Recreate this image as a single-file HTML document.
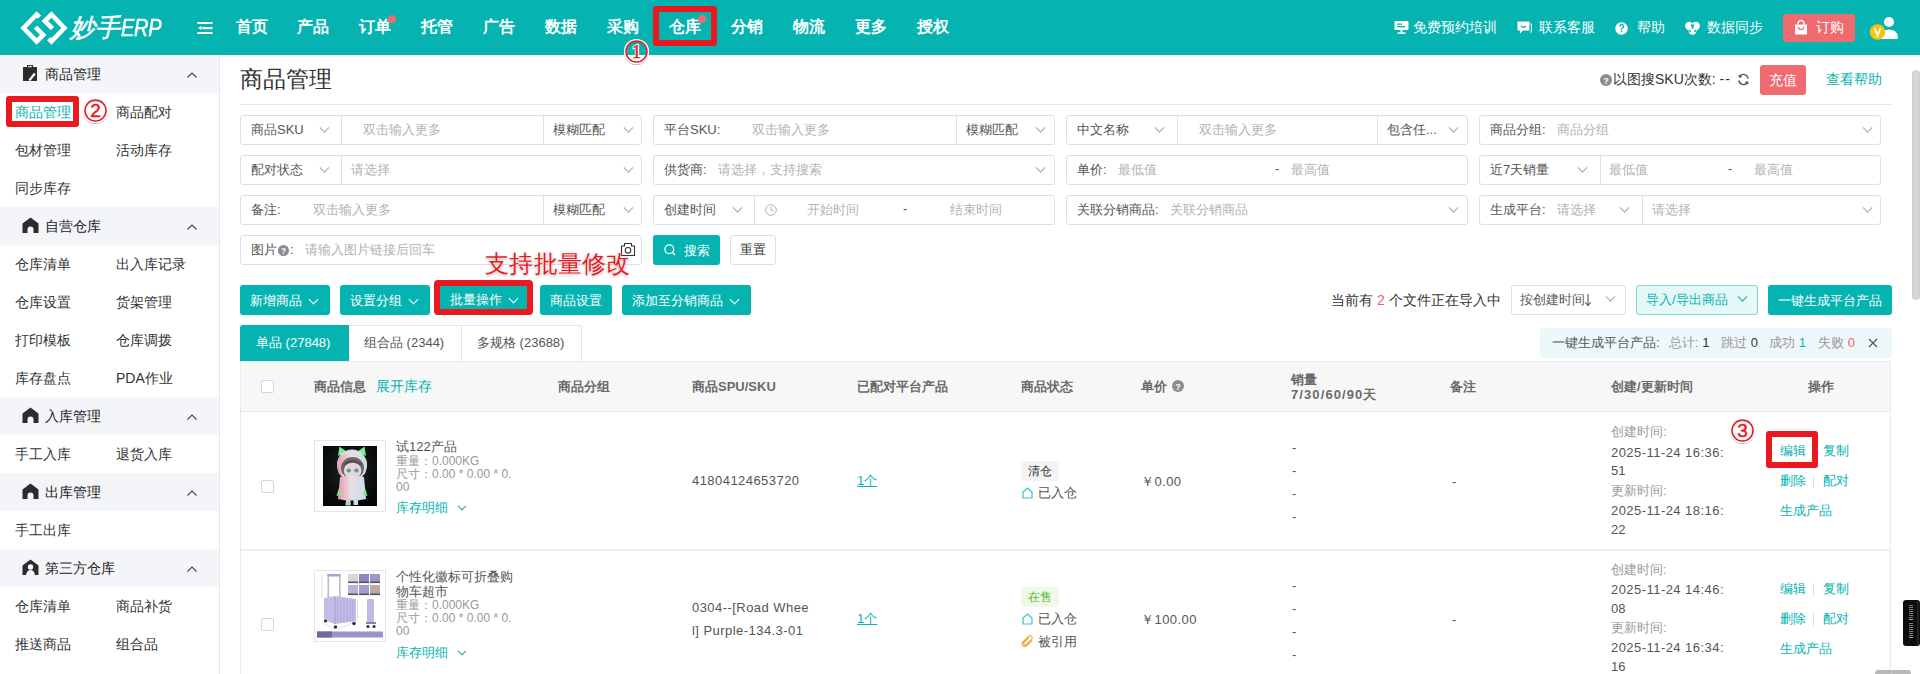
<!DOCTYPE html>
<html><head><meta charset="utf-8">
<style>
*{box-sizing:border-box;margin:0;padding:0}
html,body{width:1920px;height:674px;overflow:hidden;background:#fff;font-family:"Liberation Sans",sans-serif;color:#333;font-size:13px}
.a{position:absolute;white-space:nowrap}
#hdr{position:absolute;left:0;top:0;width:1920px;height:55px;background:#05b3b1}
.nav{position:absolute;top:16.3px;color:#fff;font-size:16px;font-weight:bold;line-height:22px}
.dot{position:absolute;width:8px;height:8px;border-radius:50%;background:#f06b70}
.hr{position:absolute;top:17px;color:#fff;font-size:14px;line-height:20px}
#side{position:absolute;left:0;top:55px;width:220px;height:619px;border-right:1px solid #e6e8ee;background:#fff}
.sh{position:absolute;left:0;width:219px;height:38px;background:#f4f5f9}
.sh .t{position:absolute;left:45px;top:9px;font-size:14px;line-height:20px;color:#222}
.sh .car{position:absolute;left:187px;top:17px}
.sh .ic{position:absolute;left:22px;top:10px}
.si{position:absolute;font-size:14px;line-height:20px;color:#333}
.box{position:absolute;border:1px solid #dcdfe6;border-radius:3px;background:#fff}
.lbl{position:absolute;font-size:13px;line-height:18px;color:#555}
.ph{position:absolute;font-size:13px;line-height:18px;color:#b0b3b8}
.chev{position:absolute;width:7px;height:7px;border-right:1px solid #a6a9b0;border-bottom:1px solid #a6a9b0;transform:translateY(-0.7px) rotate(45deg)}
.vl{position:absolute;width:1px;background:#dcdfe6}
.btn{position:absolute;height:30px;background:#05b3b1;color:#fff;border-radius:3px;font-size:13px;line-height:31px;text-align:center}
.wchev{display:inline-block;width:7px;height:7px;border-right:1px solid #fff;border-bottom:1px solid #fff;transform:rotate(45deg);margin-left:8px;position:relative;top:-2.5px}
.th{position:absolute;top:377.5px;font-size:13px;font-weight:bold;color:#6a6a6a;line-height:18px}
.td{position:absolute;font-size:13px;line-height:18px;color:#555}
.lnk{color:#05b3b1}
.redbox{position:absolute;border:4px solid #e8191f;border-radius:3px}
.circ{position:absolute;width:22px;height:22px;border-radius:50%;border:1.5px solid #e8191f;background:#fff;color:#e8191f;font-size:16px;line-height:19px;text-align:center;box-shadow:0 0 2px rgba(0,0,0,.4)}
</style></head><body>
<div id="hdr">
  <svg class="a" style="left:15px;top:5px" width="60" height="45" viewBox="0 0 60 45">
    <g fill="none" stroke="#fff" stroke-width="4.6" stroke-linejoin="miter" stroke-miterlimit="10">
      <path d="M24.5 12.2 L21.7 9.5 L8.5 23 L21.7 36.4 L28.2 29.9 L20.5 22.2"/>
      <path d="M33.7 33.7 L36.4 36.4 L49.4 23 L36.4 9.5 L29.8 16 L37.5 23.7"/>
    </g>
  </svg>
  <div class="a" style="left:70px;top:12px;color:#fff;font-size:25px;font-style:italic;line-height:30px;letter-spacing:-0.3px;-webkit-text-stroke:0.5px #fff">妙手<span style="display:inline-block;font-size:23px;letter-spacing:-0.3px;margin-left:1.5px;transform:scaleX(0.87);transform-origin:0 0">ERP</span></div>
  <svg class="a" style="left:197px;top:21px" width="17" height="14" viewBox="0 0 17 14">
    <g fill="#fff"><rect x="0.5" y="1" width="15" height="2"/><rect x="5.5" y="6" width="10" height="2.2"/><rect x="0.5" y="11" width="15" height="2"/><path d="M1 7 L4.7 5 L4.7 9Z"/></g>
  </svg>
  <div class="nav" style="left:236px">首页</div>
  <div class="nav" style="left:297px">产品</div>
  <div class="nav" style="left:359px">订单</div>
  <div class="dot" style="left:388px;top:15px"></div>
  <div class="nav" style="left:421px">托管</div>
  <div class="nav" style="left:483px">广告</div>
  <div class="nav" style="left:545px">数据</div>
  <div class="nav" style="left:607px">采购</div>
  <div class="nav" style="left:669px">仓库</div>
  <div class="dot" style="left:698px;top:15px"></div>
  <div class="nav" style="left:731px">分销</div>
  <div class="nav" style="left:793px">物流</div>
  <div class="nav" style="left:855px">更多</div>
  <div class="nav" style="left:917px">授权</div>

  <svg class="a" style="left:1394px;top:20px" width="15" height="14" viewBox="0 0 15 14"><rect x="0.5" y="1" width="14" height="9" rx="1" fill="#fff"/><rect x="3" y="3.5" width="5" height="1.3" fill="#05b3b1"/><rect x="3" y="6" width="8" height="1.3" fill="#05b3b1"/><rect x="6.5" y="10" width="2" height="2.5" fill="#fff"/><rect x="3.5" y="12.3" width="8" height="1.5" fill="#fff"/></svg>
  <div class="hr" style="left:1413px">免费预约培训</div>
  <svg class="a" style="left:1517px;top:21px" width="15" height="13" viewBox="0 0 15 13"><path d="M0.5 0.5 H12.5 V9.5 H6 L3 12.5 V9.5 H0.5Z" fill="#fff"/><path d="M13 3 H14.5 V11 H13" fill="none" stroke="#fff" stroke-width="1"/><path d="M4 5 Q6.5 7.5 9 5" fill="none" stroke="#05b3b1" stroke-width="1.2"/></svg>
  <div class="hr" style="left:1539px">联系客服</div>
  <svg class="a" style="left:1615px;top:22px" width="13" height="13" viewBox="0 0 13 13"><circle cx="6.5" cy="6.5" r="6.2" fill="#fff"/><text x="6.5" y="10.3" font-size="10" font-weight="bold" fill="#05b3b1" text-anchor="middle" font-family="Liberation Sans">?</text></svg>
  <div class="hr" style="left:1637px">帮助</div>
  <svg class="a" style="left:1685px;top:21px" width="15" height="14" viewBox="0 0 15 14"><g fill="#fff"><circle cx="4.3" cy="5" r="4.2"/><circle cx="10.7" cy="5" r="4.2"/><circle cx="7.5" cy="9.5" r="4.2"/></g><g fill="#05b3b1"><path d="M7.5 7.2 L5.3 3.6 H9.7Z"/><path d="M7.5 7.8 L10 11.5 L11.6 7.2Z" opacity="0"/><circle cx="7.5" cy="6.8" r="1"/><path d="M5 8 L3.6 10.4 L6.2 11.4Z"/><path d="M10 8 L11.4 10.4 L8.8 11.4Z"/></g></svg>
  <div class="hr" style="left:1707px">数据同步</div>
  <div class="a" style="left:1783px;top:14px;width:72px;height:28px;background:#f06b6f;border-radius:3px"></div>
  <svg class="a" style="left:1794px;top:20px" width="14" height="15" viewBox="0 0 14 15"><path d="M1 4.5 H13 V14.5 H1Z" fill="#fff"/><path d="M4 4.5 V3.5 A3 3 0 0 1 10 3.5 V4.5" fill="none" stroke="#fff" stroke-width="1.4"/><path d="M4.5 7 A2.5 2.5 0 0 0 9.5 7" fill="none" stroke="#f06b6f" stroke-width="1.3"/></svg>
  <div class="hr" style="left:1816px">订购</div>
  <svg class="a" style="left:1868px;top:16px" width="32" height="25" viewBox="0 0 32 25"><circle cx="21" cy="6" r="5" fill="#fff"/><path d="M11.5 21.5 Q11.5 14 21 13.5 Q30 14 30 21.5 Q30 23 28.5 23 H13 Q11.5 23 11.5 21.5Z" fill="#fff"/><circle cx="9.5" cy="16" r="7.8" fill="#f5c412"/><path d="M6.6 12.3 L9.5 19.8 L12.4 12.3" fill="none" stroke="#fff" stroke-width="1.8"/></svg>
</div>

<div id="side">
<div class="sh" style="top:0px"><svg class="ic" width="16" height="17" viewBox="0 0 16 17"><rect x="1" y="2" width="14" height="14" fill="#2c2c2c"/><rect x="5" y="0" width="6" height="3" fill="#2c2c2c"/><rect x="6" y="0.8" width="4" height="1.5" fill="#ccc"/><path d="M7.3 15.5 L12.8 8.5" stroke="#fff" stroke-width="2.2"/></svg><div class="t">商品管理</div><svg class="car" width="10" height="6" viewBox="0 0 10 6"><path d="M0.5 5.5 L5 1 L9.5 5.5" fill="none" stroke="#444" stroke-width="1.1"/></svg></div>
<div class="si" style="left:15px;top:47px;color:#05b3b1">商品管理</div>
<div class="si" style="left:116px;top:47px">商品配对</div>
<div class="si" style="left:15px;top:85px">包材管理</div>
<div class="si" style="left:116px;top:85px">活动库存</div>
<div class="si" style="left:15px;top:123px">同步库存</div>
<div class="sh" style="top:152px"><svg class="ic" width="17" height="16" viewBox="0 0 17 16"><path d="M0.5 6.5 L8.5 0.5 L16.5 6.5 V16 H11.5 V12.5 A3 3 0 0 0 5.5 12.5 V16 H0.5Z" fill="#2c2c2c"/></svg><div class="t">自营仓库</div><svg class="car" width="10" height="6" viewBox="0 0 10 6"><path d="M0.5 5.5 L5 1 L9.5 5.5" fill="none" stroke="#444" stroke-width="1.1"/></svg></div>
<div class="si" style="left:15px;top:199px">仓库清单</div>
<div class="si" style="left:116px;top:199px">出入库记录</div>
<div class="si" style="left:15px;top:237px">仓库设置</div>
<div class="si" style="left:116px;top:237px">货架管理</div>
<div class="si" style="left:15px;top:275px">打印模板</div>
<div class="si" style="left:116px;top:275px">仓库调拨</div>
<div class="si" style="left:15px;top:313px">库存盘点</div>
<div class="si" style="left:116px;top:313px">PDA作业</div>
<div class="sh" style="top:342px"><svg class="ic" width="17" height="16" viewBox="0 0 17 16"><path d="M0.5 6.5 L8.5 0.5 L16.5 6.5 V16 H11.5 V12.5 A3 3 0 0 0 5.5 12.5 V16 H0.5Z" fill="#2c2c2c"/></svg><div class="t">入库管理</div><svg class="car" width="10" height="6" viewBox="0 0 10 6"><path d="M0.5 5.5 L5 1 L9.5 5.5" fill="none" stroke="#444" stroke-width="1.1"/></svg></div>
<div class="si" style="left:15px;top:389px">手工入库</div>
<div class="si" style="left:116px;top:389px">退货入库</div>
<div class="sh" style="top:418px"><svg class="ic" width="17" height="16" viewBox="0 0 17 16"><path d="M0.5 6.5 L8.5 0.5 L16.5 6.5 V16 H11.5 V12.5 A3 3 0 0 0 5.5 12.5 V16 H0.5Z" fill="#2c2c2c"/></svg><div class="t">出库管理</div><svg class="car" width="10" height="6" viewBox="0 0 10 6"><path d="M0.5 5.5 L5 1 L9.5 5.5" fill="none" stroke="#444" stroke-width="1.1"/></svg></div>
<div class="si" style="left:15px;top:465px">手工出库</div>
<div class="sh" style="top:494px"><svg class="ic" width="17" height="16" viewBox="0 0 17 16"><path d="M0.5 6.5 L8.5 0.5 L16.5 6.5 V16 H13 Q12 11 8.5 11 Q5 11 4 16 H0.5Z" fill="#2c2c2c"/><circle cx="8.5" cy="8" r="2.7" fill="#fff"/></svg><div class="t">第三方仓库</div><svg class="car" width="10" height="6" viewBox="0 0 10 6"><path d="M0.5 5.5 L5 1 L9.5 5.5" fill="none" stroke="#444" stroke-width="1.1"/></svg></div>
<div class="si" style="left:15px;top:541px">仓库清单</div>
<div class="si" style="left:116px;top:541px">商品补货</div>
<div class="si" style="left:15px;top:579px">推送商品</div>
<div class="si" style="left:116px;top:579px">组合品</div>
</div>

<!-- MAIN -->
<div class="a" style="left:240px;top:65px;font-size:23px;line-height:28px;color:#333">商品管理</div>


<!-- title right -->
<svg class="a" style="left:1600px;top:74px" width="12" height="12" viewBox="0 0 12 12"><circle cx="6" cy="6" r="6" fill="#8a8d93"/><text x="6" y="9.5" font-size="9" font-weight="bold" fill="#fff" text-anchor="middle" font-family="Liberation Sans">?</text></svg>
<div class="a" style="left:1613px;top:69px;font-size:14px;line-height:20px;color:#333">以图搜SKU次数: <span style="letter-spacing:1px">--</span></div>
<svg class="a" style="left:1737px;top:73px" width="13" height="13" viewBox="0 0 14 14"><g fill="none" stroke="#555" stroke-width="1.4"><path d="M12 6 A5 5 0 0 0 3 3.5"/><path d="M2 8 A5 5 0 0 0 11 10.5"/></g><path d="M1.5 1.5 L2.2 5.5 L5.8 4Z" fill="#555"/><path d="M12.5 12.5 L11.8 8.5 L8.2 10Z" fill="#555"/></svg>
<div class="a" style="left:1760px;top:65px;width:46px;height:30px;background:#f06b6f;border-radius:3px;color:#fff;font-size:14px;line-height:30px;text-align:center">充值</div>
<div class="a lnk" style="left:1826px;top:69px;font-size:14px;line-height:20px">查看帮助</div>
<div class="a" style="left:240px;top:104px;width:1652px;height:1px;background:#e4e6eb"></div>

<!-- filter row 1 -->
<div class="box" style="left:240px;top:115px;width:402px;height:30px"></div>
<div class="vl" style="left:341px;top:116px;height:28px"></div>
<div class="vl" style="left:543px;top:116px;height:28px"></div>
<div class="lbl" style="left:251px;top:121px">商品SKU</div><div class="chev" style="left:321px;top:125px"></div>
<div class="ph" style="left:363px;top:121px">双击输入更多</div>
<div class="lbl" style="left:553px;top:121px">模糊匹配</div><div class="chev" style="left:625px;top:125px"></div>

<div class="box" style="left:653px;top:115px;width:402px;height:30px"></div>
<div class="vl" style="left:956px;top:116px;height:28px"></div>
<div class="lbl" style="left:664px;top:121px">平台SKU:</div>
<div class="ph" style="left:752px;top:121px">双击输入更多</div>
<div class="lbl" style="left:966px;top:121px">模糊匹配</div><div class="chev" style="left:1037px;top:125px"></div>

<div class="box" style="left:1066px;top:115px;width:402px;height:30px"></div>
<div class="vl" style="left:1177px;top:116px;height:28px"></div>
<div class="vl" style="left:1377px;top:116px;height:28px"></div>
<div class="lbl" style="left:1077px;top:121px">中文名称</div><div class="chev" style="left:1156px;top:125px"></div>
<div class="ph" style="left:1199px;top:121px">双击输入更多</div>
<div class="lbl" style="left:1387px;top:121px">包含任...</div><div class="chev" style="left:1450px;top:125px"></div>

<div class="box" style="left:1479px;top:115px;width:402px;height:30px"></div>
<div class="lbl" style="left:1490px;top:121px">商品分组:</div>
<div class="ph" style="left:1557px;top:121px">商品分组</div><div class="chev" style="left:1864px;top:125px"></div>

<!-- filter row 2 -->
<div class="box" style="left:240px;top:155px;width:402px;height:30px"></div>
<div class="vl" style="left:341px;top:156px;height:28px"></div>
<div class="lbl" style="left:251px;top:161px">配对状态</div><div class="chev" style="left:321px;top:165px"></div>
<div class="ph" style="left:351px;top:161px">请选择</div><div class="chev" style="left:625px;top:165px"></div>

<div class="box" style="left:653px;top:155px;width:402px;height:30px"></div>
<div class="lbl" style="left:664px;top:161px">供货商:</div>
<div class="ph" style="left:718px;top:161px">请选择，支持搜索</div><div class="chev" style="left:1037px;top:165px"></div>

<div class="box" style="left:1066px;top:155px;width:402px;height:30px"></div>
<div class="lbl" style="left:1077px;top:161px">单价:</div>
<div class="ph" style="left:1118px;top:161px">最低值</div>
<div class="lbl" style="left:1275px;top:160px">-</div>
<div class="ph" style="left:1291px;top:161px">最高值</div>

<div class="box" style="left:1479px;top:155px;width:402px;height:30px"></div>
<div class="vl" style="left:1600px;top:156px;height:28px"></div>
<div class="lbl" style="left:1490px;top:161px">近7天销量</div><div class="chev" style="left:1579px;top:165px"></div>
<div class="ph" style="left:1609px;top:161px">最低值</div>
<div class="lbl" style="left:1728px;top:160px">-</div>
<div class="ph" style="left:1754px;top:161px">最高值</div>

<!-- filter row 3 -->
<div class="box" style="left:240px;top:195px;width:402px;height:30px"></div>
<div class="vl" style="left:543px;top:196px;height:28px"></div>
<div class="lbl" style="left:251px;top:201px">备注:</div>
<div class="ph" style="left:313px;top:201px">双击输入更多</div>
<div class="lbl" style="left:553px;top:201px">模糊匹配</div><div class="chev" style="left:625px;top:205px"></div>

<div class="box" style="left:653px;top:195px;width:402px;height:30px"></div>
<div class="vl" style="left:754px;top:196px;height:28px"></div>
<div class="lbl" style="left:664px;top:201px">创建时间</div><div class="chev" style="left:734px;top:205px"></div>
<svg class="a" style="left:765px;top:204px" width="12" height="12" viewBox="0 0 12 12"><circle cx="6" cy="6" r="5.3" fill="none" stroke="#b0b3b8" stroke-width="1"/><path d="M6 3 V6.3 H8.5" fill="none" stroke="#b0b3b8" stroke-width="1"/></svg>
<div class="ph" style="left:807px;top:201px">开始时间</div>
<div class="lbl" style="left:903px;top:200px">-</div>
<div class="ph" style="left:950px;top:201px">结束时间</div>

<div class="box" style="left:1066px;top:195px;width:402px;height:30px"></div>
<div class="lbl" style="left:1077px;top:201px">关联分销商品:</div>
<div class="ph" style="left:1170px;top:201px">关联分销商品</div><div class="chev" style="left:1450px;top:205px"></div>

<div class="box" style="left:1479px;top:195px;width:402px;height:30px"></div>
<div class="vl" style="left:1642px;top:196px;height:28px"></div>
<div class="lbl" style="left:1490px;top:201px">生成平台:</div>
<div class="ph" style="left:1557px;top:201px">请选择</div><div class="chev" style="left:1621px;top:205px"></div>
<div class="ph" style="left:1652px;top:201px">请选择</div><div class="chev" style="left:1864px;top:205px"></div>

<!-- filter row 4 -->
<div class="box" style="left:240px;top:235px;width:402px;height:30px"></div>
<div class="lbl" style="left:251px;top:241px">图片</div>
<svg class="a" style="left:278px;top:245px" width="11" height="11" viewBox="0 0 12 12"><circle cx="6" cy="6" r="6" fill="#8a8d93"/><text x="6" y="9.5" font-size="9" font-weight="bold" fill="#fff" text-anchor="middle" font-family="Liberation Sans">?</text></svg>
<div class="lbl" style="left:290px;top:241px">:</div>
<div class="ph" style="left:305px;top:241px">请输入图片链接后回车</div>
<svg class="a" style="left:620px;top:242px" width="16" height="15" viewBox="0 0 16 15"><g fill="none" stroke="#333" stroke-width="1.1"><path d="M1.5 4 H4.5 V1.5 H11.5 V4 H14.5 V13.5 H1.5Z"/><circle cx="8" cy="8.3" r="2.8"/></g></svg>
<div class="btn" style="left:653px;top:235px;width:67px">
 <svg style="position:absolute;left:11px;top:9px" width="12" height="12" viewBox="0 0 12 12"><circle cx="5.3" cy="5.3" r="4.4" fill="none" stroke="#fff" stroke-width="1.3"/><path d="M8.5 8.5 L11 11" stroke="#fff" stroke-width="1.3"/></svg>
 <span style="position:absolute;left:31px;top:0">搜索</span></div>
<div class="box" style="left:730px;top:235px;width:46px;height:30px"></div>
<div class="lbl" style="left:740px;top:241px;color:#333">重置</div>


<!-- action buttons -->
<div class="btn" style="left:240px;top:285px;width:90px;text-align:left;padding-left:10px">新增商品<i class="wchev"></i></div>
<div class="btn" style="left:340px;top:285px;width:90px;text-align:left;padding-left:10px">设置分组<i class="wchev"></i></div>
<div class="btn" style="left:440px;top:285px;width:88px;text-align:left;padding-left:10px">批量操作<i class="wchev"></i></div>
<div class="btn" style="left:540px;top:285px;width:72px;text-align:left;padding-left:10px">商品设置</div>
<div class="btn" style="left:622px;top:285px;width:129px;text-align:left;padding-left:10px">添加至分销商品<i class="wchev"></i></div>

<div class="a" style="left:1331px;top:290px;font-size:14px;line-height:20px;color:#333">当前有 <span style="color:#f0626b">2</span> 个文件正在导入中</div>
<div class="box" style="left:1511px;top:285px;width:115px;height:30px"></div>
<div class="lbl" style="left:1520px;top:291px;color:#555">按创建时间</div><svg class="a" style="left:1584px;top:294px" width="8" height="12" viewBox="0 0 8 12"><path d="M4 0 V11.2" stroke="#555" stroke-width="1.1"/><path d="M1.3 8.3 L4 11.5 L6.7 8.3" fill="none" stroke="#555" stroke-width="1.1"/></svg><div class="chev" style="left:1607px;top:294px"></div>
<div class="a" style="left:1636px;top:285px;width:122px;height:30px;border:1px solid #7fd4d2;background:#e6f7f7;border-radius:3px"></div>
<div class="a lnk" style="left:1646px;top:291px;font-size:13px;line-height:18px">导入/导出商品</div><div class="chev" style="left:1739px;top:294px;border-color:#05b3b1"></div>
<div class="btn" style="left:1768px;top:285px;width:124px">一键生成平台产品</div>

<!-- tabs -->
<div class="a" style="left:240px;top:325px;width:342px;height:36px;border:1px solid #e4e6eb;border-bottom:none;border-radius:3px 3px 0 0"></div>
<div class="a" style="left:240px;top:325px;width:109px;height:36px;background:#05b3b1;border-radius:3px 0 0 0"></div>
<div class="a" style="left:461px;top:325px;width:1px;height:36px;background:#e4e6eb"></div>
<div class="a" style="left:256px;top:334px;font-size:13px;line-height:18px;color:#fff">单品 (27848)</div>
<div class="a" style="left:364px;top:334px;font-size:13px;line-height:18px;color:#555">组合品 (2344)</div>
<div class="a" style="left:477px;top:334px;font-size:13px;line-height:18px;color:#555">多规格 (23688)</div>

<div class="a" style="left:1540px;top:328px;width:352px;height:30px;background:#eef7f9;border-radius:3px"></div>
<div class="a" style="left:1552px;top:334px;font-size:13px;line-height:18px;color:#555">一键生成平台产品:</div>
<div class="a" style="left:1669px;top:334px;font-size:13px;line-height:18px;color:#999">总计: <span style="color:#333">1</span></div>
<div class="a" style="left:1721px;top:334px;font-size:13px;line-height:18px;color:#999">跳过 <span style="color:#333">0</span></div>
<div class="a" style="left:1769px;top:334px;font-size:13px;line-height:18px;color:#999">成功 <span style="color:#05b3b1">1</span></div>
<div class="a" style="left:1818px;top:334px;font-size:13px;line-height:18px;color:#999">失败 <span style="color:#f0626b">0</span></div>
<svg class="a" style="left:1868px;top:338px" width="10" height="10" viewBox="0 0 10 10"><path d="M1 1 L9 9 M9 1 L1 9" stroke="#555" stroke-width="1.2"/></svg>

<!-- table -->
<div class="a" style="left:240px;top:361px;width:1651px;height:313px;border:1px solid #e8eaef;border-bottom:none"></div>
<div class="a" style="left:241px;top:362px;width:1649px;height:50px;background:#f7f7f8;border-bottom:1px solid #e8eaef"></div>
<div class="a" style="left:261px;top:380px;width:13px;height:13px;border:1px solid #d4d6db;border-radius:2px;background:#fff"></div>
<div class="th" style="left:314px">商品信息</div>
<div class="th lnk" style="left:376px;top:376px;font-weight:normal;font-size:14px;line-height:20px">展开库存</div>
<div class="th" style="left:558px">商品分组</div>
<div class="th" style="left:692px">商品SPU/SKU</div>
<div class="th" style="left:857px">已配对平台产品</div>
<div class="th" style="left:1021px">商品状态</div>
<div class="th" style="left:1141px">单价</div>
<svg class="a" style="left:1172px;top:380px" width="12" height="12" viewBox="0 0 12 12"><circle cx="6" cy="6" r="6" fill="#8a8d93"/><text x="6" y="9.5" font-size="9" font-weight="bold" fill="#fff" text-anchor="middle" font-family="Liberation Sans">?</text></svg>
<div class="th" style="left:1291px;top:373px;line-height:14.5px">销量<br><span style="letter-spacing:1.1px">7/30/60/90</span>天</div>
<div class="th" style="left:1450px">备注</div>
<div class="th" style="left:1611px">创建/更新时间</div>
<div class="th" style="left:1808px">操作</div>
<div class="a" style="left:241px;top:549px;width:1649px;height:2px;background:#eceef3"></div>


<!-- row 1 -->
<div class="a" style="left:261px;top:480px;width:13px;height:13px;border:1px solid #d4d6db;border-radius:2px;background:#fff"></div>
<div class="a" style="left:314px;top:440px;width:72px;height:72px;border:1px solid #e3e5ea;background:#fff"></div>
<svg class="a" style="left:323px;top:446px" width="54" height="60" viewBox="0 0 54 60">
  <defs>
   <radialGradient id="glow" cx="50%" cy="40%" r="60%"><stop offset="0" stop-color="#1a2422"/><stop offset="1" stop-color="#07080a"/></radialGradient>
   <linearGradient id="coat" x1="0" x2="1"><stop offset="0" stop-color="#e59aa8"/><stop offset="0.45" stop-color="#e9dde6"/><stop offset="1" stop-color="#c9dde6"/></linearGradient>
   <filter id="bl"><feGaussianBlur stdDeviation="0.6"/></filter>
  </defs>
  <rect width="54" height="60" fill="url(#glow)"/>
  <g filter="url(#bl)">
  <path d="M15 10 L16.5 0.5 L24 6 Z" fill="#7cf08e"/>
  <path d="M43 10 L41.5 0.5 L34 6 Z" fill="#7cf08e"/>
  <ellipse cx="29" cy="19" rx="15" ry="15.5" fill="#d9e2e4"/>
  <path d="M14 19 Q14 8 29 6 Q44 8 44 19 L42 28 Q29 31 16 28Z" fill="url(#coat)"/>
  <ellipse cx="29.5" cy="22" rx="11.5" ry="11" fill="#6f6667"/>
  <ellipse cx="29.6" cy="24.5" rx="8.8" ry="8" fill="#e6d5d4"/>
  <path d="M20.5 20 Q29.5 13 38.5 20 L38 17 Q29.5 11 21 17Z" fill="#5a4e50"/>
  <ellipse cx="25.8" cy="24.5" rx="2.2" ry="2" fill="#4fa59b"/>
  <ellipse cx="33.4" cy="24.5" rx="2.2" ry="2" fill="#4fa59b"/>
  <path d="M17 31 Q29 27 41 31 L43 53 Q29 56 15 53Z" fill="url(#coat)"/>
  <path d="M16 42 L13.5 50 L18 49Z" fill="#78e88e"/>
  <path d="M42 42 L44.5 50 L40 49Z" fill="#78e88e"/>
  <rect x="23" y="52" width="4.5" height="7" fill="#dccfd4"/>
  <rect x="30.5" y="52" width="4.5" height="7" fill="#cfdde2"/>
  <rect x="22.5" y="56.5" width="5" height="3" fill="#8fe6a4"/>
  </g>
</svg>
<div class="td" style="left:396px;top:440px;font-size:13px;line-height:14px;color:#555">试122产品</div>
<div class="td" style="left:396px;top:455px;font-size:12px;line-height:13px;color:#999">重量：0.000KG</div>
<div class="td" style="left:396px;top:468px;font-size:12px;line-height:13px;color:#999">尺寸：0.00 * 0.00 * 0.</div>
<div class="td" style="left:396px;top:481px;font-size:12px;line-height:13px;color:#999">00</div>
<div class="td lnk" style="left:396px;top:499px">库存明细</div><div class="chev" style="left:459px;top:504px;border-color:#05b3b1;width:6px;height:6px"></div>
<div class="td" style="left:692px;top:472px;letter-spacing:0.45px">41804124653720</div>
<div class="td lnk" style="left:857px;top:472px;text-decoration:underline">1个</div>
<div class="a" style="left:1021px;top:461px;width:38px;height:20px;background:#f4f4f5;border-radius:2px;font-size:12px;line-height:20px;text-align:center;color:#333">清仓</div>
<svg class="a" style="left:1022px;top:487px" width="11" height="12" viewBox="0 0 11 12"><path d="M1 5 L5.5 1 L10 5 V11 H1Z" fill="none" stroke="#3bbfd0" stroke-width="1.2"/></svg>
<div class="td" style="left:1038px;top:484px">已入仓</div>
<div class="td" style="left:1141px;top:473px;letter-spacing:0.45px">￥0.00</div>
<div class="td" style="left:1292px;top:439px">-</div>
<div class="td" style="left:1292px;top:462px">-</div>
<div class="td" style="left:1292px;top:485px">-</div>
<div class="td" style="left:1292px;top:508px">-</div>
<div class="td" style="left:1452px;top:473px">-</div>
<div class="td" style="left:1611px;top:423px;color:#999">创建时间:</div>
<div class="td" style="left:1611px;top:444px;letter-spacing:0.45px">2025-11-24 16:36:</div>
<div class="td" style="left:1611px;top:462px">51</div>
<div class="td" style="left:1611px;top:482px;color:#999">更新时间:</div>
<div class="td" style="left:1611px;top:502px;letter-spacing:0.45px">2025-11-24 18:16:</div>
<div class="td" style="left:1611px;top:521px">22</div>
<div class="td lnk" style="left:1780px;top:442px">编辑</div>
<div class="td lnk" style="left:1823px;top:442px">复制</div>
<div class="td lnk" style="left:1780px;top:472px">删除</div>
<div class="a" style="left:1813px;top:475px;width:1px;height:13px;background:#dcdfe6"></div>
<div class="td lnk" style="left:1823px;top:472px">配对</div>
<div class="td lnk" style="left:1780px;top:502px">生成产品</div>

<!-- row 2 -->
<div class="a" style="left:261px;top:618px;width:13px;height:13px;border:1px solid #d4d6db;border-radius:2px;background:#fff"></div>
<div class="a" style="left:314px;top:570px;width:72px;height:72px;border:1px solid #e3e5ea;background:#fff"></div>
<svg class="a" style="left:315px;top:571px" width="70" height="70" viewBox="0 0 70 70">
  <defs><filter id="bl2"><feGaussianBlur stdDeviation="0.45"/></filter></defs>
  <rect width="70" height="70" fill="#fff"/>
  <g filter="url(#bl2)">
  <g stroke="#c8c8d0" stroke-width="0.6" fill="none"><path d="M7 4 V27"/><path d="M8 52 L19 58"/><path d="M23 58 L38 52"/><path d="M42.5 29 V48"/><path d="M50 61 H60"/></g>
  <rect x="12" y="3" width="14" height="2.6" rx="1" fill="#a7a2d4"/>
  <rect x="12.5" y="4" width="1.6" height="24" fill="#bdbdc8"/><rect x="24" y="4" width="1.6" height="24" fill="#bdbdc8"/>
  <path d="M9 27 L20 25 L41 28 V50 L20 53 L9 49Z" fill="#c2bde6"/>
  <path d="M20 26 V53" stroke="#9c95c8" stroke-width="0.8"/>
  <g stroke="#a49dd0" stroke-width="0.7"><path d="M23 28 V52 M26 28 V52 M29 28 V52 M32 28.5 V51.5 M35 28.5 V51 M38 28.5 V50.5"/></g>
  <circle cx="10.5" cy="50" r="1.6" fill="#333"/><circle cx="20.5" cy="56" r="1.8" fill="#333"/><circle cx="39" cy="52.5" r="1.8" fill="#333"/>
  <rect x="52" y="28" width="7" height="24" rx="1" fill="#bfbae4"/>
  <rect x="51" y="51" width="10" height="2" fill="#888"/>
  <circle cx="53" cy="55.5" r="1.6" fill="#333"/><circle cx="59" cy="55.5" r="1.6" fill="#333"/>
  <rect x="33" y="3" width="10" height="9" fill="#d6d6dc"/><rect x="44" y="3" width="10" height="9" fill="#8e88c0"/><rect x="55" y="3" width="10" height="9" fill="#9c96cc"/>
  <rect x="33" y="14" width="10" height="10" fill="#b8b4d8"/><rect x="44" y="14" width="10" height="10" fill="#a29cd0"/><rect x="55" y="14" width="10" height="10" fill="#c0a8a8"/>
  <g fill="#555"><rect x="33" y="10.5" width="10" height="1.6"/><rect x="44" y="10.5" width="10" height="1.6"/><rect x="55" y="10.5" width="10" height="1.6"/><rect x="33" y="22.5" width="10" height="1.6"/><rect x="44" y="22.5" width="10" height="1.6"/><rect x="55" y="22.5" width="10" height="1.6"/></g>
  <rect x="2" y="60.5" width="66" height="6" fill="#9a95c8"/>
  <rect x="2" y="60.5" width="15" height="6" fill="#6f6aa3"/>
  </g>
</svg>
<div class="td" style="left:396px;top:570px;font-size:13px;line-height:14px;color:#555">个性化徽标可折叠购</div>
<div class="td" style="left:396px;top:584.5px;font-size:13px;line-height:14px;color:#555">物车超市</div>
<div class="td" style="left:396px;top:599px;font-size:12px;line-height:13px;color:#999">重量：0.000KG</div>
<div class="td" style="left:396px;top:612px;font-size:12px;line-height:13px;color:#999">尺寸：0.00 * 0.00 * 0.</div>
<div class="td" style="left:396px;top:625px;font-size:12px;line-height:13px;color:#999">00</div>
<div class="td lnk" style="left:396px;top:644px">库存明细</div><div class="chev" style="left:459px;top:649px;border-color:#05b3b1;width:6px;height:6px"></div>
<div class="td" style="left:692px;top:599px;letter-spacing:0.45px">0304--[Road Whee</div>
<div class="td" style="left:692px;top:622px;letter-spacing:0.45px">l] Purple-134.3-01</div>
<div class="td lnk" style="left:857px;top:610px;text-decoration:underline">1个</div>
<div class="a" style="left:1021px;top:587px;width:38px;height:20px;background:#eef9e9;border-radius:2px;font-size:12px;line-height:20px;text-align:center;color:#5ab82e">在售</div>
<svg class="a" style="left:1022px;top:613px" width="11" height="12" viewBox="0 0 11 12"><path d="M1 5 L5.5 1 L10 5 V11 H1Z" fill="none" stroke="#3bbfd0" stroke-width="1.2"/></svg>
<div class="td" style="left:1038px;top:610px">已入仓</div>
<svg class="a" style="left:1021px;top:635px" width="13" height="13" viewBox="0 0 13 13"><path d="M7.5 3 L3.2 7.3 Q2.2 8.5 3.2 9.5 Q4.2 10.5 5.4 9.5 L10.5 4.4 Q12 2.6 10.5 1.4 Q9 0.2 7.4 1.6 L2 7 Q0.3 9 1.8 10.8 Q3.5 12.5 5.6 10.8 L10.5 6" fill="none" stroke="#f3a93c" stroke-width="1.2" stroke-linecap="round"/></svg>
<div class="td" style="left:1038px;top:633px">被引用</div>
<div class="td" style="left:1141px;top:611px;letter-spacing:0.45px">￥100.00</div>
<div class="td" style="left:1292px;top:577px">-</div>
<div class="td" style="left:1292px;top:600px">-</div>
<div class="td" style="left:1292px;top:623px">-</div>
<div class="td" style="left:1292px;top:646px">-</div>
<div class="td" style="left:1452px;top:611px">-</div>
<div class="td" style="left:1611px;top:561px;color:#999">创建时间:</div>
<div class="td" style="left:1611px;top:581px;letter-spacing:0.45px">2025-11-24 14:46:</div>
<div class="td" style="left:1611px;top:600px">08</div>
<div class="td" style="left:1611px;top:619px;color:#999">更新时间:</div>
<div class="td" style="left:1611px;top:639px;letter-spacing:0.45px">2025-11-24 16:34:</div>
<div class="td" style="left:1611px;top:658px">16</div>
<div class="td lnk" style="left:1780px;top:580px">编辑</div>
<div class="a" style="left:1813px;top:583px;width:1px;height:13px;background:#dcdfe6"></div>
<div class="td lnk" style="left:1823px;top:580px">复制</div>
<div class="td lnk" style="left:1780px;top:610px">删除</div>
<div class="a" style="left:1813px;top:613px;width:1px;height:13px;background:#dcdfe6"></div>
<div class="td lnk" style="left:1823px;top:610px">配对</div>
<div class="td lnk" style="left:1780px;top:640px">生成产品</div>

<!-- scrollbar -->
<div class="a" style="left:1912px;top:70px;width:8px;height:230px;background:linear-gradient(90deg,#cfcfcf,#dadada 50%,#cdcdcd);border-radius:4px"></div>
<svg class="a" style="left:1903px;top:600px" width="17" height="46" viewBox="0 0 17 46"><rect x="0" y="0" width="17" height="46" rx="3" fill="#0d0d0d"/><rect x="14.5" y="0" width="1" height="46" fill="#3a3a3a"/>
<g fill="#8a8a8a"><rect x="6" y="5" width="4" height="0.9"/><rect x="6" y="7" width="4" height="0.9"/><rect x="6" y="9" width="4" height="0.9"/><rect x="6" y="11" width="4" height="0.9"/><rect x="6" y="13" width="4" height="0.9"/><rect x="6" y="15" width="4" height="0.9"/><rect x="6" y="17" width="4" height="0.9"/>
<rect x="6" y="23" width="4" height="0.9"/><rect x="6" y="25" width="4" height="0.9"/><rect x="6" y="27" width="4" height="0.9"/><rect x="6" y="29" width="4" height="0.9"/><rect x="6" y="31" width="4" height="0.9"/><rect x="6" y="33" width="4" height="0.9"/><rect x="6" y="35" width="4" height="0.9"/></g>
<rect x="6" y="19" width="4" height="1" fill="#f0a020"/><rect x="6" y="37" width="4" height="1" fill="#70c030"/></svg>
<div class="a" style="left:1875px;top:670px;width:36px;height:6px;background:#b8b8b8;border-radius:3px"></div>
<div class="a" style="left:1891px;top:670px;width:1px;height:4px;background:#c5c8d6"></div>

<!-- annotations -->
<div class="redbox" style="left:653px;top:6px;width:64px;height:40px;border-width:6px"></div>
<svg class="a" style="left:620.7px;top:35.8px" width="31" height="31" viewBox="0 0 31 31"><defs><filter id="sh1" x="-30%" y="-30%" width="160%" height="160%"><feDropShadow dx="0" dy="0.5" stdDeviation="0.7" flood-color="#000" flood-opacity="0.5"/></filter></defs>
<circle cx="15.5" cy="15.5" r="11.3" fill="none" stroke="#fff" stroke-width="2.6" filter="url(#sh1)"/>
<circle cx="15.5" cy="15.5" r="10.5" fill="none" stroke="#e8191f" stroke-width="1.5"/>
<text x="15.5" y="22.3" font-size="18" font-family="Liberation Serif" fill="none" stroke="#fff" stroke-width="2.4" text-anchor="middle">1</text>
<text x="15.5" y="22.3" font-size="18" font-family="Liberation Serif" fill="#e8191f" stroke="#e8191f" stroke-width="0.5" text-anchor="middle">1</text></svg>
<div class="redbox" style="left:6px;top:96px;width:73px;height:31px;border-width:6px"></div>
<svg class="a" style="left:80.3px;top:94.9px" width="31" height="31" viewBox="0 0 31 31"><defs><filter id="sh2" x="-30%" y="-30%" width="160%" height="160%"><feDropShadow dx="0" dy="0.5" stdDeviation="0.7" flood-color="#000" flood-opacity="0.5"/></filter></defs>
<circle cx="15.5" cy="15.5" r="11.3" fill="none" stroke="#fff" stroke-width="2.6" filter="url(#sh2)"/>
<circle cx="15.5" cy="15.5" r="10.5" fill="none" stroke="#e8191f" stroke-width="1.5"/>
<text x="15.5" y="22.3" font-size="19" font-family="Liberation Sans" fill="none" stroke="#fff" stroke-width="2.4" text-anchor="middle">2</text>
<text x="15.5" y="22.3" font-size="19" font-family="Liberation Sans" fill="#e8191f" stroke="#e8191f" stroke-width="0.5" text-anchor="middle">2</text></svg>
<div class="redbox" style="left:434px;top:280px;width:99px;height:35px;border-width:6px;background:#05b3b1;border-radius:4px"></div>
<div class="a" style="left:450px;top:291px;font-size:13px;line-height:18px;color:#fff">批量操作<i class="wchev"></i></div>
<div class="a" style="left:485px;top:248px;font-size:24px;line-height:32px;letter-spacing:0.3px;color:#e8191f;text-shadow:0 0 1px #fff,0 0 1.5px #fff,0 1px 3px rgba(0,0,0,.35)">支持批量修改</div>
<div class="redbox" style="left:1766px;top:431px;width:52px;height:37px;border-width:6px"></div>
<svg class="a" style="left:1727.4px;top:414.9px" width="31" height="31" viewBox="0 0 31 31"><defs><filter id="sh3" x="-30%" y="-30%" width="160%" height="160%"><feDropShadow dx="0" dy="0.5" stdDeviation="0.7" flood-color="#000" flood-opacity="0.5"/></filter></defs>
<circle cx="15.5" cy="15.5" r="11.3" fill="none" stroke="#fff" stroke-width="2.6" filter="url(#sh3)"/>
<circle cx="15.5" cy="15.5" r="10.5" fill="none" stroke="#e8191f" stroke-width="1.5"/>
<text x="15.5" y="22.3" font-size="19" font-family="Liberation Sans" fill="none" stroke="#fff" stroke-width="2.4" text-anchor="middle">3</text>
<text x="15.5" y="22.3" font-size="19" font-family="Liberation Sans" fill="#e8191f" stroke="#e8191f" stroke-width="0.5" text-anchor="middle">3</text></svg>
</body></html>
